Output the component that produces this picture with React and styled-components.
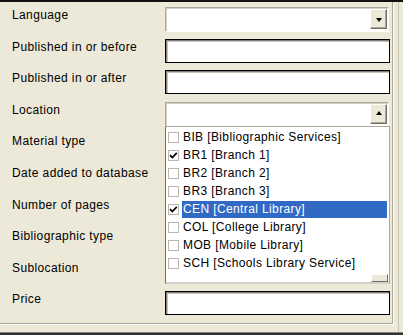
import { Fragment } from "react";
import styled, { createGlobalStyle } from "styled-components";

const GlobalStyle = createGlobalStyle`
  body {
    margin: 0;
    background: #ece9d8;
  }
`;

const Window = styled.div`
  width: 403px;
  height: 335px;
  box-sizing: border-box;
  background: #ece9d8;
  border-top: 2px solid #111;
  box-shadow: inset -4px 0 0 #ece9d8, inset -5px 0 0 #c9c6b8;
  font-family: "Liberation Sans", Arial, sans-serif;
  font-size: 12px;
  letter-spacing: 0.38px;
  color: #000;
  overflow: hidden;
  display: flex;
  flex-direction: column;
`;

const Panel = styled.div`
  width: 393px;
  height: 322px;
  box-sizing: border-box;
  border-right: 1px solid #aca899;
  border-bottom: 1px solid #aca899;
  box-shadow: 1px 1px 0 #fff;
  padding: 5px 0 0 12px;
`;

const BottomEdge = styled.div`
  margin-top: auto;
  height: 2px;
  border-top: 1px solid #808080;
  background: #303030;
`;

const Form = styled.div`
  display: grid;
  grid-template-columns: 153px 225px;
  grid-auto-rows: 24px;
  row-gap: 7.6px;
`;

const Label = styled.div`
  line-height: 14px;
  padding-top: 1px;
  white-space: nowrap;
`;

const Covered = styled.div``;

const Field = styled.div`
  position: relative;
  box-sizing: border-box;
  height: ${(p) => (p.$combo ? "25px" : "24px")};
  width: ${(p) => (p.$combo ? "224px" : "225px")};
  background: #fff;
  ${(p) =>
    p.$combo
      ? `
    border: 1px solid;
    border-color: #aca899 #fff #fff #aca899;
    box-shadow: inset 1px 1px 0 #d4d0c8;
  `
      : `
    border: 1px solid #000;
    box-shadow: inset 1px 1px 0 #808080, inset 2px 2px 0 #c8c5b8;
  `}
`;

const DropButton = styled.div`
  position: absolute;
  right: 1px;
  top: 1px;
  width: 17px;
  height: 20px;
  box-sizing: border-box;
  background: #ece9d8;
  border: 1px solid;
  border-color: #fff #716f64 #716f64 #fff;
  box-shadow: inset -1px -1px 0 #aca899;
  display: flex;
  align-items: center;
  justify-content: center;
`;

const Arrow = styled.span`
  width: 0;
  height: 0;
  border-left: 3.5px solid transparent;
  border-right: 3.5px solid transparent;
  ${(p) =>
    p.$up
      ? "border-bottom: 4px solid #000; margin-top: -1px;"
      : "border-top: 4px solid #000; margin-top: 1px;"}
`;

const List = styled.div`
  position: absolute;
  left: -1px;
  top: 23px;
  width: 225px;
  height: 158px;
  box-sizing: border-box;
  background: #fff;
  border: 1px solid;
  border-color: #aca899 #aca899 #d4d0c8 #716f64;
  padding-top: 2px;
  display: flex;
  flex-direction: column;
  z-index: 2;
`;

const Option = styled.div`
  display: flex;
  align-items: center;
  height: 18px;
  flex: none;
  padding-left: 2px;
`;

const Box = styled.span`
  width: 11px;
  height: 11px;
  box-sizing: border-box;
  border: 1px solid #b9b7ae;
  background: #fff;
  flex: none;
  display: flex;
  align-items: center;
  justify-content: center;
  margin-right: 3px;
`;

const OptionText = styled.span`
  flex: 1;
  height: 17px;
  line-height: 17px;
  padding-left: 1px;
  margin-right: 2px;
  white-space: nowrap;
  background: ${(p) => (p.$selected ? "#316ac5" : "transparent")};
  color: ${(p) => (p.$selected ? "#fff" : "#000")};
`;

const ListFooter = styled.div`
  margin-top: auto;
  height: 10px;
  border-bottom: 1px solid #d4d0c8;
  display: flex;
  justify-content: flex-end;
  align-items: flex-end;
  padding-right: 1px;
`;

const Thumb = styled.div`
  width: 17px;
  height: 8px;
  box-sizing: border-box;
  background: #ece9d8;
  border: 1px solid;
  border-color: #fff #716f64 #716f64 #fff;
`;

const options = [
  { code: "BIB", name: "Bibliographic Services" },
  { code: "BR1", name: "Branch 1", checked: true },
  { code: "BR2", name: "Branch 2" },
  { code: "BR3", name: "Branch 3" },
  { code: "CEN", name: "Central Library", checked: true, selected: true },
  { code: "COL", name: "College Library" },
  { code: "MOB", name: "Mobile Library" },
  { code: "SCH", name: "Schools Library Service" },
];

const Check = () => (
  <svg width="9" height="9" viewBox="0 0 9 9">
    <path d="M1 4.2 L3.3 6.6 L7.8 1.8" fill="none" stroke="#000" strokeWidth="1.7" />
  </svg>
);

const LocationList = () => (
  <List>
    {options.map((o) => (
      <Option key={o.code}>
        <Box>{o.checked && <Check />}</Box>
        <OptionText $selected={o.selected}>
          {o.code} [{o.name}]
        </OptionText>
      </Option>
    ))}
    <ListFooter>
      <Thumb />
    </ListFooter>
  </List>
);

// rows whose inputs sit under the open location list
const coveredRows = [
  "Material type",
  "Date added to database",
  "Number of pages",
  "Bibliographic type",
  "Sublocation",
];

export default function App() {
  return (
    <>
      <GlobalStyle />
      <Window>
        <Panel>
          <Form>
            <Label>Language</Label>
            <Field $combo>
              <DropButton>
                <Arrow />
              </DropButton>
            </Field>

            <Label>Published in or before</Label>
            <Field />

            <Label>Published in or after</Label>
            <Field />

            <Label>Location</Label>
            <Field $combo>
              <DropButton>
                <Arrow $up />
              </DropButton>
              <LocationList />
            </Field>

            {coveredRows.map((label) => (
              <Fragment key={label}>
                <Label>{label}</Label>
                <Covered />
              </Fragment>
            ))}

            <Label>Price</Label>
            <Field />
          </Form>
        </Panel>
        <BottomEdge />
      </Window>
    </>
  );
}
